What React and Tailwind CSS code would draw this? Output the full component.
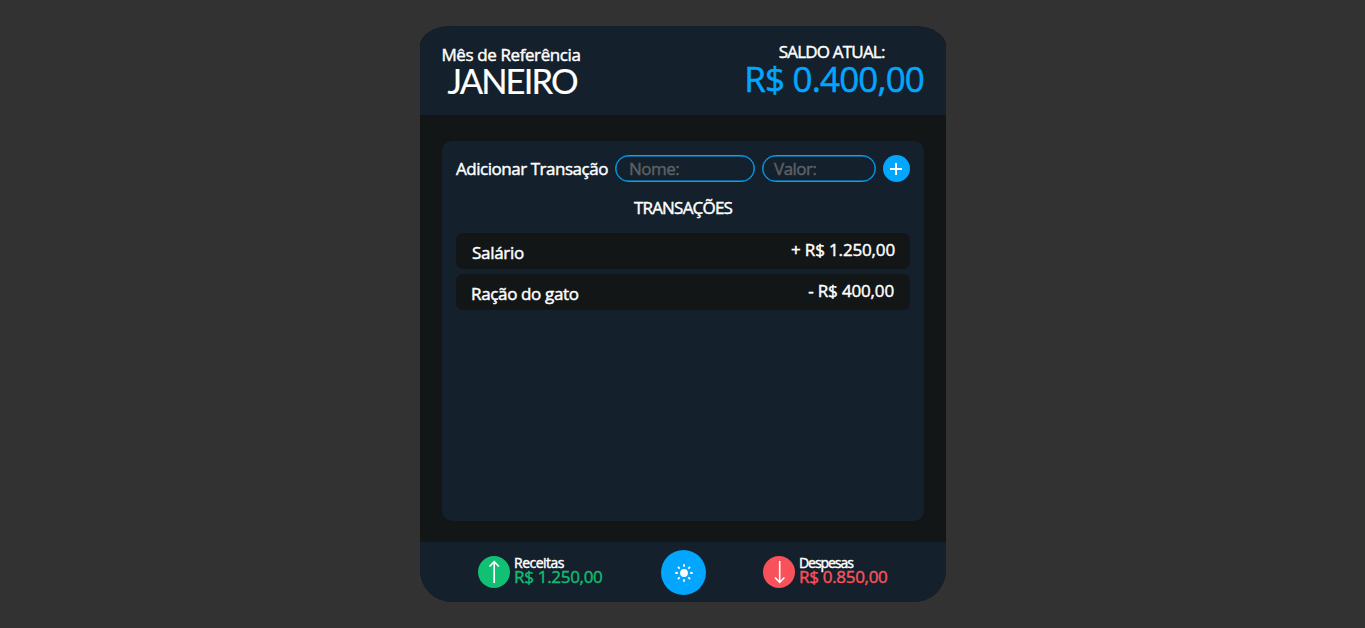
import React from "react";

const transactions = [
  { name: "Salário", amount: "+ R$ 1.250,00", nameClass: "pl-[16px] tracking-[-0.3px]", amountClass: "pr-[15px] tracking-[-0.15px]" },
  { name: "Ração do gato", amount: "- R$ 400,00", nameClass: "pl-[15px] tracking-[-0.35px]", amountClass: "pr-[16px] tracking-[-0.15px]" },
];

function Header() {
  return (
    <header className="flex h-[89px] justify-between rounded-t-[32px_20px] bg-[#14202b] pr-[22px] pl-[21px]">
      <div className="flex w-[140px] flex-col items-center pt-[18px] whitespace-nowrap">
        <span className="text-[17px] leading-[22px] tracking-[-0.4px]">Mês de Referência</span>
        <span className="pl-[2px] font-['Lato',sans-serif] text-[34.5px] leading-[29px] tracking-[-1.9px] [-webkit-text-stroke:0.2px]">JANEIRO</span>
      </div>
      <div className="flex flex-col items-center pt-[15px]">
        <span className="pr-[5px] text-[17px] leading-[22px] tracking-[-0.8px]">SALDO ATUAL:</span>
        <span className="text-[35px] leading-[31px] tracking-[-0.85px] text-[#02a6fe] [-webkit-text-stroke:0.5px]">R$ 0.400,00</span>
      </div>
    </header>
  );
}

function TransactionForm() {
  const field = "mr-[7px] h-[27px] rounded-full border border-[#02a6fe] text-[17px] leading-[26px] tracking-[-0.5px] text-[#5b6066] shadow-[inset_0_0_0_0.5px_#02a6fe]";
  return (
    <form className="flex h-[27px] items-center">
      <label className="w-[159px] text-[17px] leading-[26px] tracking-[-0.47px]">Adicionar Transação</label>
      <div className={`w-[140px] pl-[13px] ${field}`}>Nome:</div>
      <div className={`w-[114px] pl-[11px] ${field}`}>Valor:</div>
      <button type="button" className="flex size-[27px] items-center justify-center rounded-full bg-[#02a6fe]">
        <svg viewBox="0 0 27 27" className="size-[27px]" fill="none" stroke="white" strokeWidth="2">
          <path d="M7 14H19M13 8V20" />
        </svg>
      </button>
    </form>
  );
}

function Total({ label, value, color, bg, down, labelClass, valueClass }) {
  return (
    <div className="flex gap-[4px]">
      <div className={`size-[32px] rounded-full ${bg}`}>
        <svg viewBox="0 0 32 32" className="size-[32px]" fill="none" stroke="white" strokeWidth="1.6">
          {down ? <path d="M16.7 5V26M12 21.5L16.7 26.3L21.4 21.5" /> : <path d="M16.2 27V6M11.5 10.5L16.2 5.7L20.9 10.5" />}
        </svg>
      </div>
      <div className="flex flex-col whitespace-nowrap">
        <span className={`text-[14px] leading-[14px] ${labelClass}`}>{label}</span>
        <span className={`text-[17px] leading-[14px] ${color} ${valueClass}`}>{value}</span>
      </div>
    </div>
  );
}

export default function App() {
  return (
    <main className="flex h-[628px] w-full justify-center bg-[#323232] pt-[26px] font-['Open_Sans',sans-serif] text-white [-webkit-text-stroke:0.45px]">
      <div className="mr-px ml-[2px] flex h-[576px] w-[526px] flex-col overflow-hidden rounded-t-[32px_20px] rounded-b-[32px] bg-[#121617]">
        <Header />
        <section className="mx-[22px] mt-[26px] flex h-[380px] flex-col rounded-[10px] bg-[#14202b] px-[14px] pt-[14px]">
          <TransactionForm />
          <h2 className="mt-[14px] h-[37px] text-center text-[17px] leading-[24px] tracking-[-0.8px]">TRANSAÇÕES</h2>
          <ul className="flex flex-col gap-[5px]">
            {transactions.map((t) => (
              <li key={t.name} className="flex h-[36px] justify-between rounded-[7px] bg-[#121617] text-[17px]">
                <span className={`leading-[39px] ${t.nameClass}`}>{t.name}</span>
                <span className={`leading-[34px] ${t.amountClass}`}>{t.amount}</span>
              </li>
            ))}
          </ul>
        </section>
        <footer className="mt-auto flex h-[60px] bg-[#14202b] pl-[58px]">
          <div className="w-[183px] pt-[14px]">
            <Total label="Receitas" value="R$ 1.250,00" color="text-[#11bb70]" bg="bg-[#10c174]" labelClass="tracking-[-0.5px]" valueClass="tracking-[-0.3px]" />
          </div>
          <button type="button" className="mt-[8px] size-[45px] rounded-full bg-[#02a6fe]">
            <svg viewBox="0 0 45 45" className="size-[45px]" fill="none" stroke="white" strokeWidth="1.8">
              <circle cx="23" cy="23" r="3.9" fill="white" stroke="none" />
              <path d="M23 14.3V16.8M23 29.2V31.7M14.3 23H16.8M29.2 23H31.7M16.9 16.9L18.7 18.7M27.3 27.3L29.1 29.1M29.1 16.9L27.3 18.7M18.7 27.3L16.9 29.1" />
            </svg>
          </button>
          <div className="ml-[57px] pt-[14px]">
            <Total label="Despesas" value="R$ 0.850,00" color="text-[#f9515b]" bg="bg-[#f9515b]" down labelClass="tracking-[-1.05px]" valueClass="tracking-[-0.3px]" />
          </div>
        </footer>
      </div>
    </main>
  );
}
